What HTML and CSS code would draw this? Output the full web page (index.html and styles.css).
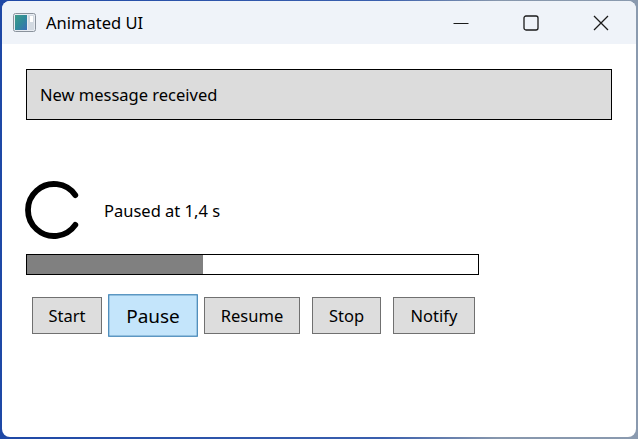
FILE: index.html
```html
<!DOCTYPE html>
<html lang="en">
<head>
<meta charset="utf-8">
<title>Animated UI</title>
<link rel="stylesheet" href="styles.css">
</head>
<body>
<div class="window">
  <div class="titlebar">
    <svg class="app-icon" width="23" height="19" viewBox="0 0 23 19">
      <defs>
        <linearGradient id="g" x1="0" y1="0" x2="1" y2="1">
          <stop offset="0" stop-color="#3f9c8a"/>
          <stop offset="0.5" stop-color="#2f8a9a"/>
          <stop offset="1" stop-color="#3a6db8"/>
        </linearGradient>
      </defs>
      <rect x="0.5" y="0.5" width="22" height="18" rx="2" fill="#e8ecf2" stroke="#8a929c"/>
      <rect x="2" y="2" width="12" height="15" fill="url(#g)"/>
      <rect x="15" y="2" width="6" height="15" fill="#d3dae2"/>
      <rect x="17" y="3" width="3" height="6" fill="#ffffff"/>
    </svg>
    <span class="title">Animated UI</span>
    <div class="caption-buttons">
      <span class="cap-btn">
        <svg width="16" height="16" viewBox="0 0 16 16"><path d="M0.5 8.5H15.5" stroke="#1a1a1a" stroke-width="1"/></svg>
      </span>
      <span class="cap-btn">
        <svg width="16" height="16" viewBox="0 0 16 16"><rect x="1" y="1" width="14" height="14" rx="2" fill="none" stroke="#1a1a1a" stroke-width="1.3"/></svg>
      </span>
      <span class="cap-btn">
        <svg width="16" height="16" viewBox="0 0 16 16"><path d="M1 1L15 15M15 1L1 15" stroke="#1a1a1a" stroke-width="1.3"/></svg>
      </span>
    </div>
  </div>
  <div class="content">
    <div class="message">New message received</div>
    <div class="status-row">
      <svg class="spinner" width="60" height="60" viewBox="0 0 60 60">
        <path d="M51.3 15.1A26 26 0 1 0 51.3 44.9" fill="none" stroke="#000" stroke-width="5.8" stroke-linecap="round"/>
      </svg>
      <span class="status-text">Paused at 1,4 s</span>
    </div>
    <div class="progress"><div class="progress-fill" style="width: 39%"></div></div>
    <div class="buttons">
      <button class="btn btn-start">Start</button>
      <button class="btn btn-pause btn-active">Pause</button>
      <button class="btn btn-resume">Resume</button>
      <button class="btn btn-stop">Stop</button>
      <button class="btn btn-notify">Notify</button>
    </div>
  </div>
</div>
</body>
</html>
```
FILE: styles.css
```css
html, body {
  margin: 0;
  height: 100%;
}
body {
  background: linear-gradient(90deg, #1e48a6 0%, #3a5fae 60%, #8797ad 78%, #8a9aaf 100%);
  padding: 1px 2px 2px 2px;
  box-sizing: border-box;
  font-family: "Segoe UI", "Noto Sans", sans-serif;
  color: #000;
}
.window {
  height: 100%;
  background: #ffffff;
  border-radius: 8px;
  overflow: hidden;
  display: flex;
  flex-direction: column;
}
.titlebar {
  height: 43px;
  background: #eff3f9;
  display: flex;
  align-items: center;
  flex-shrink: 0;
}
.app-icon {
  margin-left: 11px;
  margin-top: -1px;
}
.title {
  margin-left: 10px;
  font-size: 16.5px;
  color: #000;
}
.caption-buttons {
  margin-left: auto;
  display: flex;
  height: 100%;
}
.cap-btn {
  width: 70px;
  display: flex;
  align-items: center;
  justify-content: center;
}
.content {
  padding: 25px 24px 0 24px;
  display: flex;
  flex-direction: column;
  align-items: flex-start;
}
.message {
  box-sizing: border-box;
  width: 586px;
  height: 51px;
  background: #dcdcdc;
  border: 1px solid #000;
  padding-left: 13px;
  display: flex;
  align-items: center;
  font-size: 16.5px;
}
.status-row {
  margin-top: 60px;
  display: flex;
  align-items: center;
}
.spinner {
  margin-left: -2px;
}
.status-text {
  margin-left: 20px;
  font-size: 16.5px;
}
.progress {
  margin-top: 14px;
  box-sizing: border-box;
  width: 453px;
  height: 21px;
  border: 1px solid #000;
  background: #fff;
}
.progress-fill {
  height: 100%;
  background: #808080;
}
.buttons {
  margin-top: 22px;
  display: flex;
  align-items: center;
}
.btn {
  margin: 0 6px;
  height: 37px;
  padding: 0;
  font-family: inherit;
  font-size: 16.5px;
  background: #dddddd;
  border: 1px solid #707070;
  color: #000;
  border-radius: 0;
}
.btn-start { width: 70px; }
.btn-pause { width: 78px; }
.btn-resume { width: 96px; }
.btn-stop { width: 69px; }
.btn-notify { width: 82px; }
.btn-active {
  background: #c4e5fb;
  border-color: #3c7fb1;
  transform: scale(1.15);
}
```
